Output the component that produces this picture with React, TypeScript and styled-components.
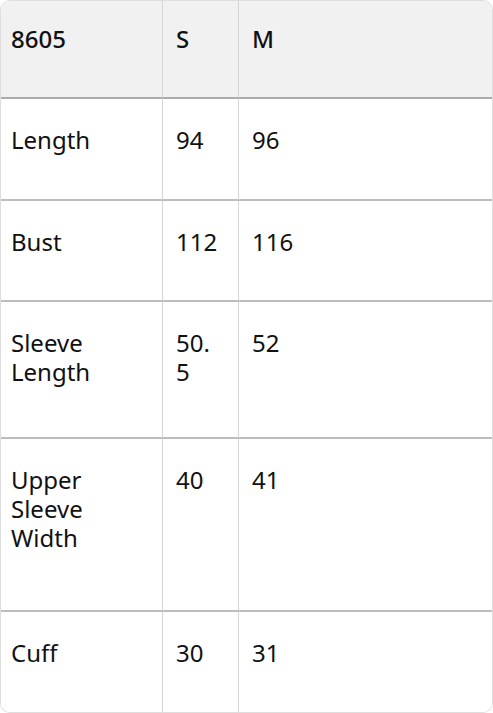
import React from "react";
import styled, { createGlobalStyle } from "styled-components";

const Global = createGlobalStyle`
  html, body { margin: 0; padding: 0; background: #ffffff; }
  body { font-family: "Noto Sans", "Open Sans", sans-serif; color: #111; }
`;

const Table = styled.div`
  box-sizing: border-box;
  width: 493px;
  height: 713px;
  border: 1px solid #dedede;
  border-radius: 10px;
  overflow: hidden;
  display: grid;
  grid-template-columns: 162px 76px 1fr;
`;

const Cell = styled.div<{ $head?: boolean; $h: number; $first?: boolean; $last?: boolean; $bottom?: string; $wrap?: boolean }>`
  box-sizing: border-box;
  height: ${(p) => p.$h}px;
  padding: ${(p) => (p.$head ? 23 : 26)}px 18px 0 ${(p) => (p.$first ? 10 : 13)}px;
  background: ${(p) => (p.$head ? "#f1f1f1" : "#ffffff")};
  border-right: ${(p) => (p.$last ? "none" : "1px solid #d6d6d6")};
  border-bottom: ${(p) => p.$bottom ?? "none"};
  font-size: 24px;
  line-height: 29px;
  font-weight: ${(p) => (p.$head ? 500 : 400)};
  color: #111;
  word-break: ${(p) => (p.$wrap ? "break-all" : "normal")};
`;

const rows: { cells: string[]; h: number }[] = [
  { cells: ["Length", "94", "96"], h: 102 },
  { cells: ["Bust", "112", "116"], h: 101 },
  { cells: ["Sleeve Length", "50.5", "52"], h: 137 },
  { cells: ["Upper Sleeve Width", "40", "41"], h: 173 },
  { cells: ["Cuff", "30", "31"], h: 101 },
];

export default function App() {
  const head = ["8605", "S", "M"];
  return (
    <>
      <Global />
      <Table>
        {head.map((t, i) => (
          <Cell key={"h" + i} $head $h={98} $first={i === 0} $last={i === 2} $bottom="2px solid #ababab">
            {t}
          </Cell>
        ))}
        {rows.map((r, ri) =>
          r.cells.map((t, ci) => (
            <Cell
              key={ri + "-" + ci}
              $h={r.h}
              $first={ci === 0}
              $last={ci === 2}
              $wrap={ci === 1}
              $bottom={ri < rows.length - 1 ? "2px solid #bdbdbd" : undefined}
            >
              {t}
            </Cell>
          ))
        )}
      </Table>
    </>
  );
}
